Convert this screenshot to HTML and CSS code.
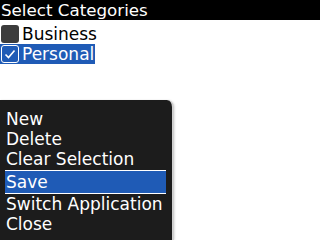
FILE: index.html
```html
<!DOCTYPE html>
<html>
<head>
<meta charset="utf-8">
<link rel="stylesheet" href="styles.css">
</head>
<body>
<div class="screen">
  <div class="title">Select Categories</div>
  <div class="list">
    <div class="row"><span class="box"></span><span class="label">Business</span></div>
    <div class="row selected"><span class="box checked"><svg width="16" height="16" viewBox="0 0 16 16"><path d="M3.5 8.5 L6.5 11.5 L12.5 4.5" fill="none" stroke="#fff" stroke-width="1.6"/></svg></span><span class="label">Personal</span></div>
  </div>
  <div class="menu">
    <div class="item">New</div>
    <div class="item">Delete</div>
    <div class="item">Clear Selection</div>
    <div class="item active">Save</div>
    <div class="item">Switch Application</div>
    <div class="item">Close</div>
  </div>
</div>
</body>
</html>
```
FILE: styles.css
```css
html, body {
  margin: 0;
  padding: 0;
  background: #fff;
}
.screen {
  position: relative;
  width: 320px;
  height: 240px;
  overflow: hidden;
  font-family: "DejaVu Sans", sans-serif;
  font-size: 17px;
  background: #fff;
}
.title {
  height: 20px;
  line-height: 20px;
  background: #000;
  color: #fff;
  padding-left: 1px;
  font-size: 16.7px;
}
.list {
  padding-top: 4px;
}
.row {
  display: flex;
  align-items: center;
  height: 20px;
  color: #000;
  width: max-content;
}
.row.selected {
  background: #1f5bb6;
  color: #fff;
  padding-right: 1px;
}
.box {
  width: 18px;
  height: 18px;
  box-sizing: border-box;
  margin-left: 1px;
  margin-right: 3px;
  border-radius: 3px;
  background: #3c3c3c;
  display: flex;
  align-items: center;
  justify-content: center;
}
.box.checked {
  background: #1f5bb6;
  border: 1.5px solid #fff;
}
.label {
  line-height: 20px;
}
.menu {
  position: absolute;
  left: 0;
  top: 100px;
  width: 174px;
  height: 140px;
  background: #1c1c1c;
  border-right: 2px solid #d0d0d0;
  border-top-right-radius: 7px;
  padding-top: 9px;
  box-sizing: border-box;
  box-shadow: 1px 0 2px rgba(0,0,0,0.12);
}
.item {
  height: 20px;
  line-height: 20px;
  color: #fff;
  padding-left: 6px;
  white-space: nowrap;
}
.item.active {
  margin-left: 5px;
  margin-right: 6px;
  padding-left: 1px;
  height: 22px;
  line-height: 22px;
  background: #1f5bb6;
  border-top: 1px solid #fff;
  border-bottom: 1px solid #fff;
  margin-top: 1px;
}
```
